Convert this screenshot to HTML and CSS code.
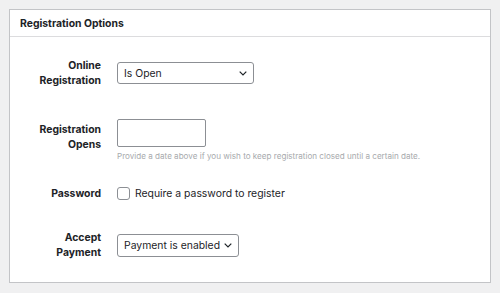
FILE: index.html
```html
<!DOCTYPE html>
<html lang="en">
<head>
  <meta charset="UTF-8" />
  <meta name="viewport" content="width=device-width,initial-scale=1.0" />
  <title>Registration Options</title>
  <link rel="stylesheet" href="styles.css">
</head>
<body>
  <div class="postbox">
    <div class="postbox-header">
      <h2>Registration Options</h2>
    </div>

    <div class="form-table">
      <div class="row-label">Online<br>Registration</div>
      <div class="row-field field-open">
        <div class="select select-open">
          <span>Is Open</span>
          <svg class="chevron" width="8" height="5" viewBox="0 0 8 5"><path d="M0.7 0.7L4 4L7.3 0.7" fill="none" stroke="#1d2327" stroke-width="1.2"/></svg>
        </div>
      </div>

      <div class="row-label">Registration<br>Opens</div>
      <div class="row-field field-date">
        <div class="text-input"></div>
        <p class="description">Provide a date above if you wish to keep registration closed until a certain date.</p>
      </div>

      <div class="row-label">Password</div>
      <div class="row-field field-password">
        <label class="checkbox-row"><span class="checkbox"></span>Require a password to register</label>
      </div>

      <div class="row-label">Accept<br>Payment</div>
      <div class="row-field field-payment">
        <div class="select select-payment">
          <span>Payment is enabled</span>
          <svg class="chevron" width="8" height="5" viewBox="0 0 8 5"><path d="M0.7 0.7L4 4L7.3 0.7" fill="none" stroke="#1d2327" stroke-width="1.2"/></svg>
        </div>
      </div>
    </div>
  </div>
</body>
</html>
```

FILE: styles.css
```css
body {
  margin: 0;
  padding: 9px;
  background-color: #f0f0f1;
  font-family: Inter, "Noto Sans", sans-serif;
  color: #1d2327;
  font-size: 10.4px;
}
.postbox {
  background-color: #fff;
  border: 1px solid #c3c4c7;
  box-sizing: border-box;
  height: 274px;
}
.postbox-header {
  height: 26px;
  border-bottom: 1px solid #dcdcde;
  display: flex;
  align-items: center;
  padding-left: 10px;
}
.postbox-header h2 {
  margin: 0;
  font-size: 10.4px;
  font-weight: 700;
}
.form-table {
  display: grid;
  grid-template-columns: 91px 1fr;
  grid-template-rows: 64px 64px 44px auto;
  column-gap: 16px;
  padding-top: 21px;
}
.row-label {
  text-align: right;
  font-weight: 700;
  line-height: 15px;
}
.row-field { display: flex; flex-direction: column; align-items: flex-start; }
.field-open { margin-top: 4px; }
.field-date { margin-top: -3px; }
.field-password { margin-top: 1px; }
.field-payment { margin-top: 4px; }
.select {
  height: 22px;
  box-sizing: border-box;
  border: 1px solid #8c8f94;
  border-radius: 3px;
  display: flex;
  align-items: center;
  justify-content: space-between;
  padding: 0 6px 0 6px;
  white-space: nowrap;
}
.select-open { width: 137px; }
.select-payment { width: 122px; height: 23px; }
.text-input {
  width: 89px;
  height: 28px;
  box-sizing: border-box;
  border: 1px solid #8c8f94;
  border-radius: 2px;
}
.description {
  margin: 4px 0 0;
  font-size: 8.1px;
  line-height: 11px;
  color: #a7aaad;
}
.checkbox-row {
  display: flex;
  align-items: center;
  gap: 5px;
  line-height: 13px;
}
.checkbox {
  width: 13px;
  height: 13px;
  box-sizing: border-box;
  border: 1px solid #8c8f94;
  border-radius: 3px;
}
```
